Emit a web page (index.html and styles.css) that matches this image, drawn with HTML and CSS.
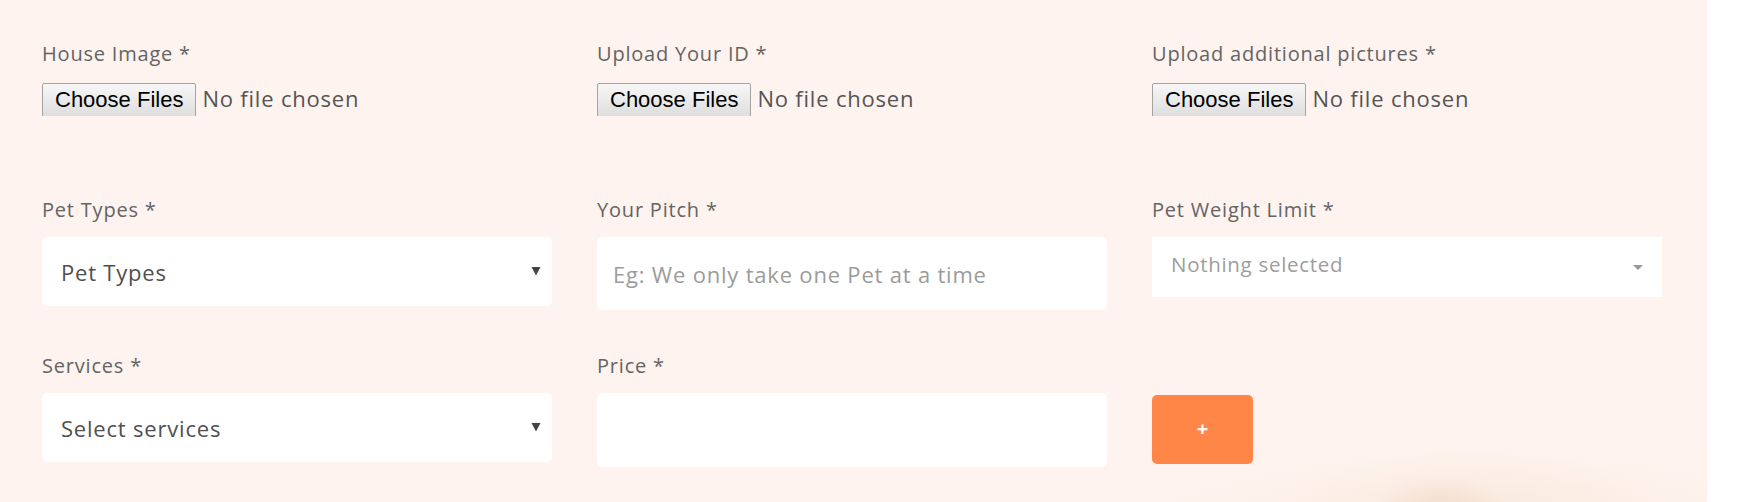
FILE: index.html
```html
<!DOCTYPE html>
<html lang="en">
<head>
<meta charset="utf-8">
<title>Listing form</title>
<link rel="stylesheet" href="styles.css">
</head>
<body>
<main class="panel">
  <form class="listing-form">
    <div class="row row-files">
      <div class="field">
        <label class="field-label" for="house-image">House Image *</label>
        <input class="file-input" id="house-image" type="file" multiple>
      </div>
      <div class="field">
        <label class="field-label" for="id-upload">Upload Your ID *</label>
        <input class="file-input" id="id-upload" type="file" multiple>
      </div>
      <div class="field">
        <label class="field-label" for="extra-pictures">Upload additional pictures *</label>
        <input class="file-input" id="extra-pictures" type="file" multiple>
      </div>
    </div>

    <div class="row row-details">
      <div class="field">
        <label class="field-label" for="pet-types">Pet Types *</label>
        <div class="select-wrap">
          <select class="native-select" id="pet-types">
            <option>Pet Types</option>
          </select>
          <svg class="select-arrow" width="10" height="10" viewBox="0 0 10 10" aria-hidden="true"><path d="M0.5 1 H9.5 L5 9.5 Z" fill="#444"/></svg>
        </div>
      </div>
      <div class="field">
        <label class="field-label" for="pitch">Your Pitch *</label>
        <input class="text-input text-pitch" id="pitch" type="text" placeholder="Eg: We only take one Pet at a time">
      </div>
      <div class="field">
        <label class="field-label">Pet Weight Limit *</label>
        <div class="picker">
          <span class="picker-text">Nothing selected</span>
          <svg class="picker-caret" width="10" height="5" viewBox="0 0 10 5" aria-hidden="true"><path d="M0 0 H10 L5 5 Z" fill="#999"/></svg>
        </div>
      </div>
    </div>

    <div class="row row-services">
      <div class="field">
        <label class="field-label" for="services">Services *</label>
        <div class="select-wrap">
          <select class="native-select" id="services">
            <option>Select services</option>
          </select>
          <svg class="select-arrow" width="10" height="10" viewBox="0 0 10 10" aria-hidden="true"><path d="M0.5 1 H9.5 L5 9.5 Z" fill="#444"/></svg>
        </div>
      </div>
      <div class="field">
        <label class="field-label" for="price">Price *</label>
        <input class="text-input text-price" id="price" type="text">
      </div>
      <div class="field field-action">
        <button class="add-button" type="button">+</button>
      </div>
    </div>
  </form>
</main>
</body>
</html>
```

FILE: styles.css
```css
* {
  box-sizing: border-box;
}

html, body {
  margin: 0;
  padding: 0;
  background: #ffffff;
}

body {
  font-family: "Open Sans", "Liberation Sans", sans-serif;
  color: #555;
  height: 502px;
  overflow: hidden;
}

.panel {
  width: 1707px;
  height: 502px;
  background-color: #fef3ee;
  background-image:
    radial-gradient(ellipse 70px 40px at 1440px 515px, rgba(225, 190, 165, 0.35), rgba(225, 190, 165, 0) 100%),
    radial-gradient(ellipse 220px 80px at 1470px 530px, rgba(240, 214, 190, 0.35), rgba(240, 214, 190, 0) 100%),
    radial-gradient(ellipse 420px 120px at 1480px 560px, rgba(245, 226, 206, 0.3), rgba(245, 226, 206, 0) 100%);
  padding: 42px 0 0 42px;
}

.listing-form {
  display: flex;
  flex-direction: column;
}

.row {
  display: grid;
  grid-template-columns: repeat(3, 510px);
  column-gap: 45px;
  align-items: start;
}

.row-files {
  margin-bottom: 82px;
}

.row-details {
  margin-bottom: 44px;
}

.field {
  display: flex;
  flex-direction: column;
  align-items: flex-start;
}

.field-label {
  font-size: 20px;
  line-height: 24px;
  letter-spacing: 0.8px;
  color: #646464;
  margin-bottom: 15px;
}

.file-input {
  font-family: "Open Sans", "Liberation Sans", sans-serif;
  font-size: 22px;
  letter-spacing: 0.8px;
  color: #555;
  height: 35px;
  line-height: 34px;
}

.file-input::file-selector-button {
  font-family: "Liberation Sans", Arial, sans-serif;
  font-size: 22px;
  letter-spacing: 0;
  color: #000;
  height: 35px;
  padding: 0 12px;
  margin: 0 6px 0 0;
  border: 1px solid #a3a3a3;
  border-radius: 2px;
  background: linear-gradient(#f7f7f7, #dddddd);
}

.select-wrap {
  position: relative;
  width: 510px;
}

.native-select {
  appearance: none;
  -webkit-appearance: none;
  display: block;
  width: 510px;
  height: 69px;
  border: none;
  border-radius: 5px;
  background: #ffffff;
  padding: 0 40px 0 19px;
  font-family: "Open Sans", "Liberation Sans", sans-serif;
  font-size: 22px;
  letter-spacing: 0.8px;
  color: #4f4f4f;
}

.select-arrow {
  position: absolute;
  right: 11px;
  top: 29px;
  pointer-events: none;
}

.text-input {
  width: 510px;
  border: none;
  border-radius: 6px;
  background: #ffffff;
  padding: 0 16px;
  font-family: "Open Sans", "Liberation Sans", sans-serif;
  font-size: 22px;
  letter-spacing: 0.8px;
  color: #4f4f4f;
  outline: none;
}

.text-input::placeholder {
  color: #9b9b9b;
}

.text-pitch {
  height: 73px;
}

.text-price {
  height: 74px;
}

.picker {
  width: 510px;
  height: 60px;
  background: #ffffff;
  display: flex;
  align-items: center;
  justify-content: space-between;
  padding: 0 19px 0 19px;
}

.picker-text {
  font-size: 20.5px;
  letter-spacing: 0.7px;
  color: #9d9d9d;
  padding-bottom: 7px;
}

.picker-caret {
  display: block;
}

.field-action {
  padding-top: 41px;
}

.add-button {
  width: 101px;
  height: 69px;
  border: none;
  border-radius: 5px;
  background: #ff8647;
  color: #ffffff;
  font-family: "Open Sans", "Liberation Sans", sans-serif;
  font-size: 20px;
  font-weight: 700;
  line-height: 1;
  padding: 0 0 2px 0;
}
```
